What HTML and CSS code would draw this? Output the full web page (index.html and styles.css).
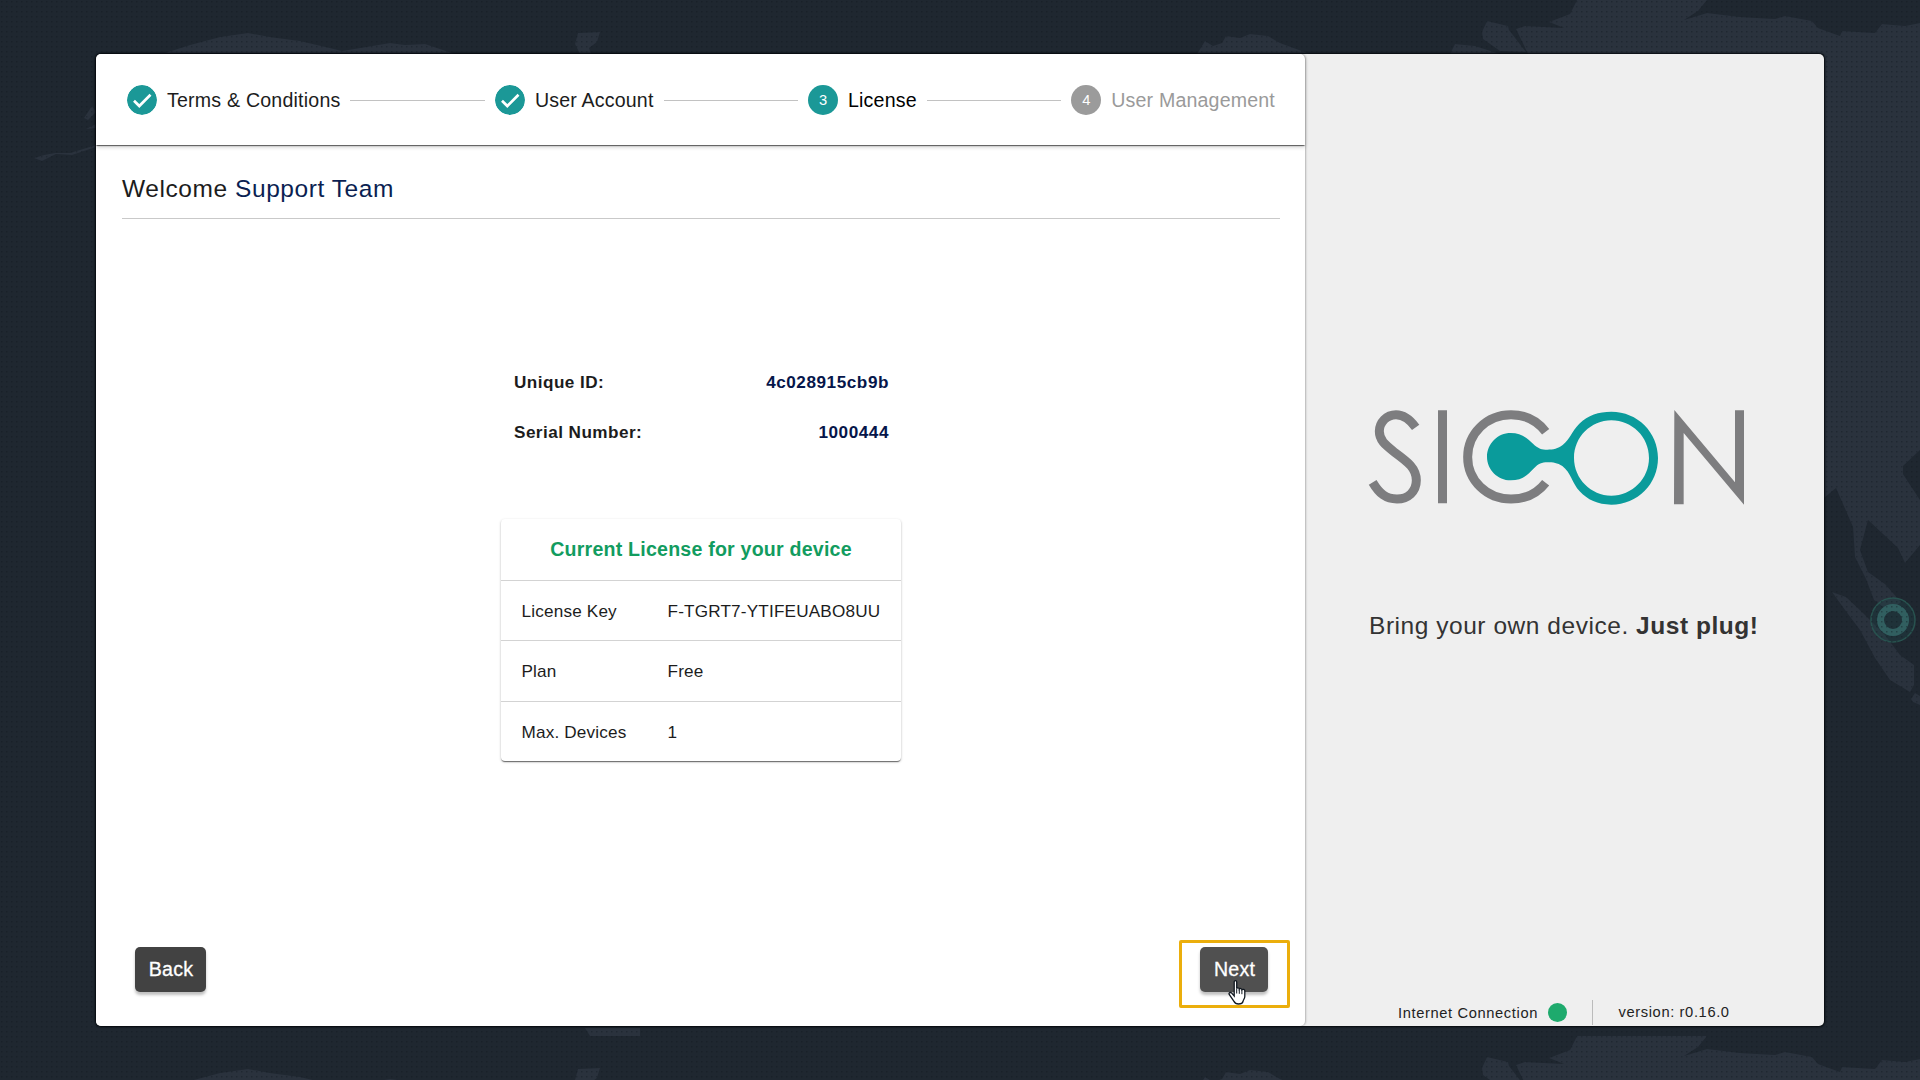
FILE: index.html
```html
<!DOCTYPE html>
<html lang="en">
<head>
<meta charset="utf-8">
<title>SICON Setup</title>
<link rel="stylesheet" href="styles.css">
</head>
<body>
<svg class="map" viewBox="0 0 1920 1080" aria-hidden="true">
  <defs>
    <pattern id="dots" width="5" height="5" patternUnits="userSpaceOnUse"><rect x="1" y="1" width="1.5" height="1.5" fill="#10171f" opacity=".4"/></pattern>
    <g id="land" fill="#2a323d">
      <path d="M165 53L190 45L220 37L248 33L270 37L300 41L330 48L342 51L360 48L390 43L405 45L425 44L455 54Z"/>
      <path d="M578 33L600 32L597 42L589 48L591 54H580L575 44Z"/>
      <path d="M1197 54L1205 41L1213 46L1222 43L1226 36L1240 38L1250 34L1268 36L1280 43L1310 54Z"/>
      <path d="M1450 54L1455 44L1475 46L1500 54Z"/>
      <path d="M1482 32L1487 21L1508 26L1509 30L1526 52L1500 51L1483 39Z"/>
      <path d="M1516 29L1525 26L1564 28L1549 22L1570 14L1577 0H1707L1698 11L1684 20L1707 13L1740 17L1775 19L1785 16L1812 21L1818 28L1840 36L1842 31L1875 33L1882 24L1905 26L1920 23V450L1903 466V474L1920 500V545L1905 563L1898 548L1868 520L1860 550L1868 572L1885 584L1901 602L1890 612L1874 600L1866 579L1855 557L1853 527L1836 488L1824 498V54H1528Z"/>
    </g>
  </defs>
  <use href="#land"/>
  <use href="#land" y="1036"/>
  <g fill="#2a323d">
    <path d="M92 106L84 118L88 120L96 112Z"/><path d="M96 124L86 129L96 128Z"/>
    <path d="M34 158L44 155L55 153L70 153L96 145V147L72 155L56 154L42 161Z"/>
    <path d="M1832 592L1846 597L1862 612L1885 635L1900 655L1914 665V685L1910 692L1890 680L1875 658L1860 630L1845 610Z"/>
    <path d="M1911 699L1915 693L1920 696V705L1913 702Z"/>
    <path d="M585 1028H640V1036H590Z"/>
  </g>
  <circle cx="1893" cy="620" r="22" fill="#1f5554" fill-opacity=".25" stroke="#28524f" stroke-width="1.5"/>
  <circle cx="1893" cy="620" r="12.5" fill="none" stroke="#315f60" stroke-width="7"/>
  <rect width="1920" height="1080" fill="url(#dots)"/>
</svg>

<div class="wizard">
  <main class="panel">
    <header class="stepper">
      <div class="step"><svg class="dot" viewBox="0 0 30 30"><circle cx="15" cy="15" r="15"/><path d="M7 15.7L12.3 21L23.5 9.8"/></svg><span class="long">Terms &amp; Conditions</span></div>
      <i class="connector"></i>
      <div class="step"><svg class="dot" viewBox="0 0 30 30"><circle cx="15" cy="15" r="15"/><path d="M7 15.7L12.3 21L23.5 9.8"/></svg><span>User Account</span></div>
      <i class="connector"></i>
      <div class="step active"><b class="dot num">3</b><span>License</span></div>
      <i class="connector"></i>
      <div class="step pending"><b class="dot num">4</b><span>User Management</span></div>
    </header>
    <section class="content">
      <h1 class="welcome">Welcome <span>Support Team</span></h1>
      <dl class="ids">
        <div><dt>Unique ID:</dt><dd>4c028915cb9b</dd></div>
        <div><dt>Serial Number:</dt><dd>1000444</dd></div>
      </dl>
      <div class="license">
        <h2>Current License for your device</h2>
        <div class="row"><span>License Key</span><span>F-TGRT7-YTIFEUABO8UU</span></div>
        <div class="row"><span>Plan</span><span>Free</span></div>
        <div class="row"><span>Max. Devices</span><span>1</span></div>
      </div>
    </section>
    <footer class="actions">
      <button class="btn back">Back</button>
      <div class="highlight">
        <button class="btn next">Next</button>
        <svg class="cursor" viewBox="0 0 19 25"><path d="M6.2 1.9c0-1.6 2.5-1.6 2.5 0v6.6c.4-1 2.5-.9 2.6.5.5-.8 2.4-.6 2.6.7.8-.8 2.9-.3 2.9 1.2v5.6c0 2.2-1.6 3.4-1.8 5-.3 1.4-2 2.5-4.5 2.5-2.7 0-3.7-1-4.7-2.9L1.2 14.4c-.7-1.6 1.3-2.6 2.5-1.2l2.5 2.9z" fill="#fff" stroke="#111820" stroke-width="1.3"/><path d="M8.7 8.5v5M11.3 9.2v4.6M13.9 10v4.2" fill="none" stroke="#111820" stroke-width="1"/></svg>
      </div>
    </footer>
  </main>
  <aside class="brand">
    <div class="hero">
      <svg class="logo" viewBox="84 86 1134 290" role="img" aria-label="SICON">
        <g fill="none" stroke="#7d7d7f" stroke-width="27">
          <path d="M227 141C207 113 190 103 168 103C140 103 118 126 118 153C118 180 135 193 164 216C205 246 229 264 229 300C229 334 204 356 171 356C138 356 118 340 98 306"/>
          <path d="M307.500 90V369"/>
          <path d="M617 154C592 121 556 103 513 103C440 103 383 160 383 230C383 300 440 356 513 356C556 356 592 339 617 307"/>
        </g>
        <path fill="#7d7d7f" d="M1003 89L1185 306V90H1212V373L1031 158V372H1002Z"/>
        <path fill="#0a9b9b" fill-rule="evenodd" d="M512 158C542 158 560 171 579 190C594 205 606 208 622 208C640 208 654 205 668 194C692 174 694 154 718 130C744 104 776 94 814 94C893 94 954 156 954 233C954 311 893 373 814 373C773 373 742 358 719 333C696 308 693 277 667 257C652 248 640 246 622 246C606 246 595 250 582 264C561 286 545 300 512 300C473 300 441 268 441 229C441 190 473 158 512 158ZM814 120C753 120 702 170 702 233C702 295 753 346 814 346C876 346 927 295 927 233C927 170 876 120 814 120Z"/>
      </svg>
      <p class="tagline">Bring your own device. <b>Just plug!</b></p>
    </div>
    <div class="status">
      <span class="net">Internet Connection</span><i class="online"></i>
      <span class="version">version: r0.16.0</span>
    </div>
  </aside>
</div>
</body>
</html>
```
FILE: styles.css
```css
* { box-sizing: border-box; }
body {
  margin: 0;
  height: 1080px;
  padding: 54px 96px;
  overflow: hidden;
  background: #1f2730;
  color: #1c1c1c;
  font-family: "Liberation Sans", Arial, sans-serif;
}
h1, h2, p, dl, dd { margin: 0; font-weight: normal; }
.map { position: absolute; inset: 0; width: 1920px; height: 1080px; }
.wizard {
  position: relative;
  display: flex;
  width: 1728px;
  height: 972px;
  background: #efefef;
  border-radius: 5px;
  box-shadow: 0 0 2px 1px #05090d;
}
.panel {
  display: flex;
  flex-direction: column;
  width: 1209px;
  background: #fff;
  border-radius: 5px;
  box-shadow: 1px 0 2px rgba(0, 0, 0, .25);
}
.stepper {
  display: flex;
  align-items: center;
  gap: 10px;
  height: 91px;
  padding: 1px 30px 0 31px;
  border-radius: 5px 5px 0 0;
  box-shadow: 0 2px 1px -1px rgba(0, 0, 0, .4), 0 1px 1px rgba(0, 0, 0, .3), 0 2px 4px rgba(0, 0, 0, .2);
}
.step { display: flex; align-items: center; gap: 10px; font-size: 19.6px; letter-spacing: .17px; white-space: nowrap; }
.long { letter-spacing: .2px; }
.dot { display: block; width: 30px; height: 30px; border-radius: 50%; }
.dot circle { fill: #1b9897; }
.dot path { fill: none; stroke: #fff; stroke-width: 2.7; }
.num {
  background: #1b9897;
  color: #fff;
  font-size: 14.7px;
  font-weight: normal;
  line-height: 30px;
  letter-spacing: 0;
  text-align: center;
}
.active { color: #000; }
.pending { color: #9a9a9a; }
.pending .num { background: #9b9b9b; }
.connector { flex: 1; height: 1px; background: #c2c2c2; }
.content { flex: 1; padding: 0 25px 0 26px; }
.welcome {
  height: 74px;
  padding-top: 30px;
  border-bottom: 1px solid #c9c9c9;
  font-size: 24.5px;
  line-height: 28px;
  letter-spacing: .57px;
}
.welcome span { color: #0b1f52; }
.ids {
  width: 375px;
  margin: 138px auto 0 392px;
  font-size: 17.15px;
  font-weight: bold;
  letter-spacing: .45px;
}
.ids div { display: flex; justify-content: space-between; height: 50px; line-height: 50px; }
.ids dd { color: #06164a; font-weight: bold; letter-spacing: .55px; }
.license {
  width: 400px;
  margin: 62px 0 0 379px;
  border-radius: 4px;
  box-shadow: 0 2px 1px -1px rgba(0, 0, 0, .35), 0 1px 1px rgba(0, 0, 0, .25), 0 1px 3px rgba(0, 0, 0, .2);
}
.license h2 {
  height: 61px;
  color: #129c5f;
  font-size: 19.6px;
  font-weight: bold;
  line-height: 61px;
  letter-spacing: .21px;
  text-align: center;
}
.row {
  display: grid;
  grid-template-columns: 146px 1fr;
  height: 60.400px;
  padding-left: 20.500px;
  border-top: 1px solid #d3d3d3;
  font-size: 17.15px;
  line-height: 60px;
  letter-spacing: .18px;
}
.actions {
  display: flex;
  align-items: flex-start;
  justify-content: space-between;
  height: 86px;
  padding: 0 15px 0 39px;
}
.btn {
  height: 45px;
  padding: 0 0 0 1px;
  border: 0;
  border-radius: 5px;
  background: #424242;
  color: #fff;
  font: 19.6px/45px "Liberation Sans", Arial, sans-serif;
  letter-spacing: .2px;
  -webkit-text-stroke: .3px #fff;
  box-shadow: 0 3px 3px rgba(0, 0, 0, .25);
}
.back { width: 71px; margin-top: 7px; }
.next { width: 68px; background: #505050; }
.highlight {
  position: relative;
  display: flex;
  width: 111px;
  height: 68px;
  padding: 4px 0 0 18px;
  border: 3px solid #ebae0c;
  border-radius: 2px;
}
.cursor { position: absolute; left: 46px; top: 37px; width: 19px; height: 25px; }
.brand { display: flex; flex-direction: column; width: 519px; }
.hero { flex: 1; padding: 354.500px 0 0 63px; }
.logo { display: block; width: 378px; height: 96.700px; }
.tagline { margin: 107px 0 0 1px; color: #333; font-size: 24.5px; line-height: 28px; letter-spacing: .54px; white-space: nowrap; }
.status {
  display: flex;
  align-items: center;
  height: 26px;
  padding: 0 0 1px 93px;
  color: #222;
  font-size: 14.7px;
  letter-spacing: .62px;
  white-space: nowrap;
}
.net { width: 150px; }
.online { width: 19px; height: 19px; border-radius: 50%; background: #1eaa6d; }
.version { height: 25px; margin-left: 25px; padding-left: 25.500px; border-left: 1px solid #bbb; line-height: 25px; }
```
